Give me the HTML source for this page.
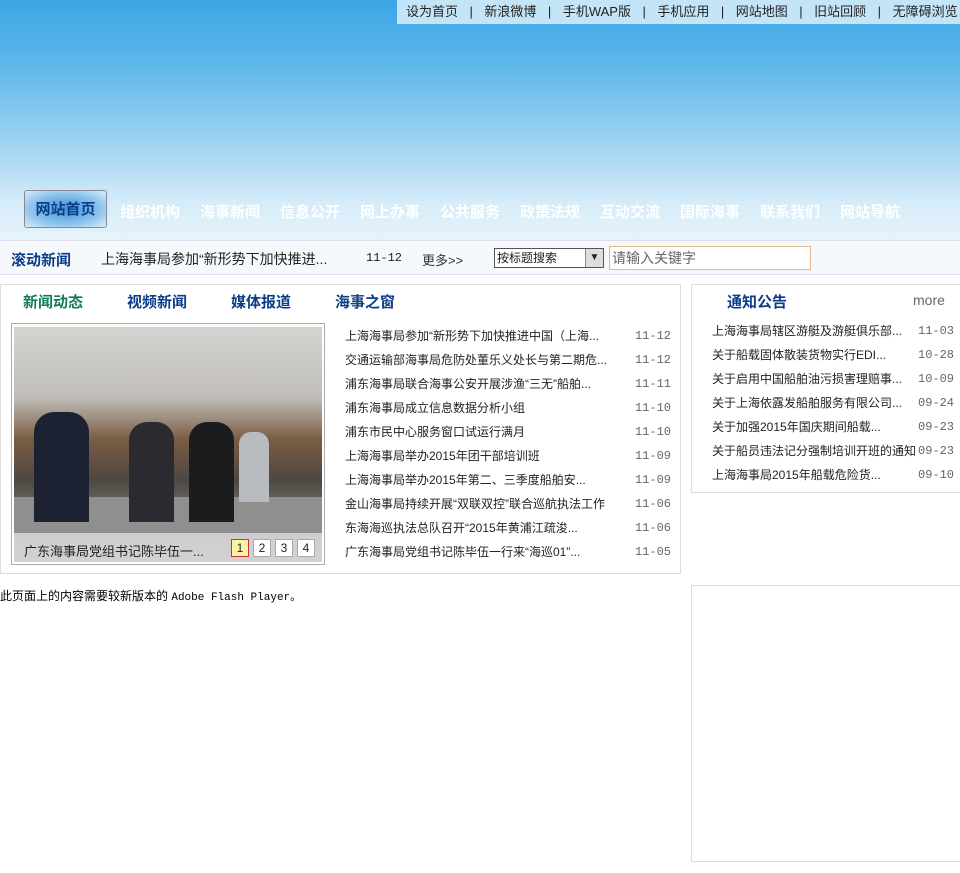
<!DOCTYPE html>
<html><head><meta charset="utf-8"><style>
*{margin:0;padding:0;box-sizing:border-box}
body{width:960px;height:873px;position:relative;background:#fff;font-family:"Liberation Sans","Noto Sans CJK SC",sans-serif;font-size:12px;color:#222;overflow:hidden}
.a{position:absolute;white-space:nowrap}
#hdr{left:0;top:0;width:960px;height:240px;background:linear-gradient(#3aa6e4 0%,#5bb6ea 25%,#9fd3f1 60%,#d6ecf9 85%,#e6f3fb 100%)}
#top{left:397px;top:0;width:563px;height:24px;background:#c4e5f7;font-size:13px;color:#222;line-height:24px;padding-left:9px}
#top span{margin:0 11.5px}
.nav{top:201px;font-size:15px;font-weight:bold;color:#fff}
#home{left:24px;top:190px;width:83px;height:38px;border:1px solid #889;border-radius:3px;background:radial-gradient(ellipse at center,#3e94d6 0%,#8cc4ec 60%,#dceefa 100%);color:#0b3d8a;font-size:15px;font-weight:bold;text-align:center;line-height:38px}
#bar{left:0;top:240px;width:960px;height:35px;background:#f5f9fc;border-top:1px solid #dde;border-bottom:1px solid #dde}
.box{border:1px solid #ddd}
.lst div{position:absolute;left:0;height:24px;line-height:24px;font-size:12px}
.d{color:#666;font-family:"Liberation Mono","Noto Sans CJK SC",monospace;font-size:11px}
.pg{top:539px;width:18px;height:18px;border:1px solid #aaa;background:#fff;font-size:12px;text-align:center;line-height:16px;color:#222}
</style></head><body>
<div class="a" id="hdr"></div>
<div class="a" id="top">设为首页<span>|</span>新浪微博<span>|</span>手机WAP版<span>|</span>手机应用<span>|</span>网站地图<span>|</span>旧站回顾<span>|</span>无障碍浏览</div>
<div class="a" id="home">网站首页</div>
<div class="a nav" style="left:120px">组织机构</div>
<div class="a nav" style="left:200px">海事新闻</div>
<div class="a nav" style="left:280px">信息公开</div>
<div class="a nav" style="left:360px">网上办事</div>
<div class="a nav" style="left:440px">公共服务</div>
<div class="a nav" style="left:520px">政策法规</div>
<div class="a nav" style="left:600px">互动交流</div>
<div class="a nav" style="left:680px">国际海事</div>
<div class="a nav" style="left:760px">联系我们</div>
<div class="a nav" style="left:840px">网站导航</div>
<div class="a" id="bar"></div>
<div class="a" style="left:11px;top:249px;font-size:15px;font-weight:bold;color:#0b3d8a">滚动新闻</div>
<div class="a" style="left:101px;top:249px;font-size:14px;color:#222">上海海事局参加“新形势下加快推进...</div>
<div class="a d" style="left:366px;top:251px;font-size:12px;color:#222">11-12</div>
<div class="a" style="left:422px;top:250px;font-size:13px;color:#333">更多&gt;&gt;</div>
<div class="a" style="left:494px;top:248px;width:110px;height:20px;border:1px solid #555;background:#fff;font-size:12px;line-height:18px;padding-left:2px">按标题搜索<div class="a" style="right:0;top:0;width:18px;height:18px;background:#ddd;border-left:1px solid #888;text-align:center;font-size:10px">▼</div></div>
<div class="a" style="left:609px;top:246px;width:202px;height:24px;border:1px solid #e8b890;background:#fff;font-size:14px;color:#666;line-height:22px;padding-left:2px">请输入关键字</div>

<div class="a box" style="left:0;top:284px;width:681px;height:290px"></div>
<div class="a" style="left:23px;top:291px;font-size:15px;font-weight:bold;color:#137a5c">新闻动态</div>
<div class="a" style="left:127px;top:291px;font-size:15px;font-weight:bold;color:#0b3d8a">视频新闻</div>
<div class="a" style="left:231px;top:291px;font-size:15px;font-weight:bold;color:#0b3d8a">媒体报道</div>
<div class="a" style="left:335px;top:291px;font-size:15px;font-weight:bold;color:#0b3d8a">海事之窗</div>
<div class="a" style="left:11px;top:323px;width:314px;height:242px;border:1px solid #aaa"></div>
<div class="a" style="left:14px;top:327px;width:308px;height:235px;background:linear-gradient(#d4d4d0 0%,#c0bdb7 30%,#7a5c44 48%,#4e4842 65%,#7d7d7a 85%,#999 100%);overflow:hidden">
 <div class="a" style="left:0;top:170px;width:308px;height:36px;background:#8f8f8f"></div>
 <div class="a" style="left:20px;top:85px;width:55px;height:110px;background:#1d2233;border-radius:20px 20px 0 0"></div>
 <div class="a" style="left:115px;top:95px;width:45px;height:100px;background:#2a2a30;border-radius:18px 18px 0 0"></div>
 <div class="a" style="left:175px;top:95px;width:45px;height:100px;background:#1a1c1e;border-radius:18px 18px 0 0"></div>
 <div class="a" style="left:225px;top:105px;width:30px;height:70px;background:#b8bcc0;border-radius:12px 12px 0 0"></div>
 <div class="a" style="left:0;top:206px;width:308px;height:29px;background:rgba(215,215,215,.9)"></div>
</div>
<div class="a" style="left:24px;top:541px;font-size:13px;color:#222">广东海事局党组书记陈毕伍一...</div>
<div class="a pg" style="left:231px;background:#fbf3a6;border-color:#c33">1</div>
<div class="a pg" style="left:253px">2</div>
<div class="a pg" style="left:275px">3</div>
<div class="a pg" style="left:297px">4</div>
<div class="a lst" style="left:345px;top:324px;width:322px">
<div style="top:0">上海海事局参加“新形势下加快推进中国（上海...</div>
<div style="top:24px">交通运输部海事局危防处董乐义处长与第二期危...</div>
<div style="top:48px">浦东海事局联合海事公安开展涉渔“三无”船舶...</div>
<div style="top:72px">浦东海事局成立信息数据分析小组</div>
<div style="top:96px">浦东市民中心服务窗口试运行满月</div>
<div style="top:120px">上海海事局举办2015年团干部培训班</div>
<div style="top:144px">上海海事局举办2015年第二、三季度船舶安...</div>
<div style="top:168px">金山海事局持续开展“双联双控”联合巡航执法工作</div>
<div style="top:192px">东海海巡执法总队召开“2015年黄浦江疏浚...</div>
<div style="top:216px">广东海事局党组书记陈毕伍一行来“海巡01”...</div>
</div>
<div class="a lst d" style="left:635px;top:324px;width:40px">
<div style="top:0">11-12</div><div style="top:24px">11-12</div><div style="top:48px">11-11</div><div style="top:72px">11-10</div><div style="top:96px">11-10</div><div style="top:120px">11-09</div><div style="top:144px">11-09</div><div style="top:168px">11-06</div><div style="top:192px">11-06</div><div style="top:216px">11-05</div>
</div>

<div class="a box" style="left:691px;top:284px;width:269px;height:209px;border-right:none"></div>
<div class="a" style="left:727px;top:291px;font-size:15px;font-weight:bold;color:#0b3d8a">通知公告</div>
<div class="a" style="left:913px;top:292px;font-size:14px;color:#666">more</div>
<div class="a lst" style="left:712px;top:319px;width:210px">
<div style="top:0">上海海事局辖区游艇及游艇俱乐部...</div>
<div style="top:24px">关于船载固体散装货物实行EDI...</div>
<div style="top:48px">关于启用中国船舶油污损害理赔事...</div>
<div style="top:72px">关于上海依露发船舶服务有限公司...</div>
<div style="top:96px">关于加强2015年国庆期间船载...</div>
<div style="top:120px">关于船员违法记分强制培训开班的通知</div>
<div style="top:144px">上海海事局2015年船载危险货...</div>
</div>
<div class="a lst d" style="left:918px;top:319px;width:40px">
<div style="top:0">11-03</div><div style="top:24px">10-28</div><div style="top:48px">10-09</div><div style="top:72px">09-24</div><div style="top:96px">09-23</div><div style="top:120px">09-23</div><div style="top:144px">09-10</div>
</div>

<div class="a" style="left:0;top:587px;font-size:12px;color:#000">此页面上的内容需要较新版本的 <span style="font-family:'Liberation Mono',monospace;font-size:11px">Adobe Flash Player。</span></div>
<div class="a box" style="left:691px;top:585px;width:269px;height:277px;border-right:none"></div>
</body></html>
